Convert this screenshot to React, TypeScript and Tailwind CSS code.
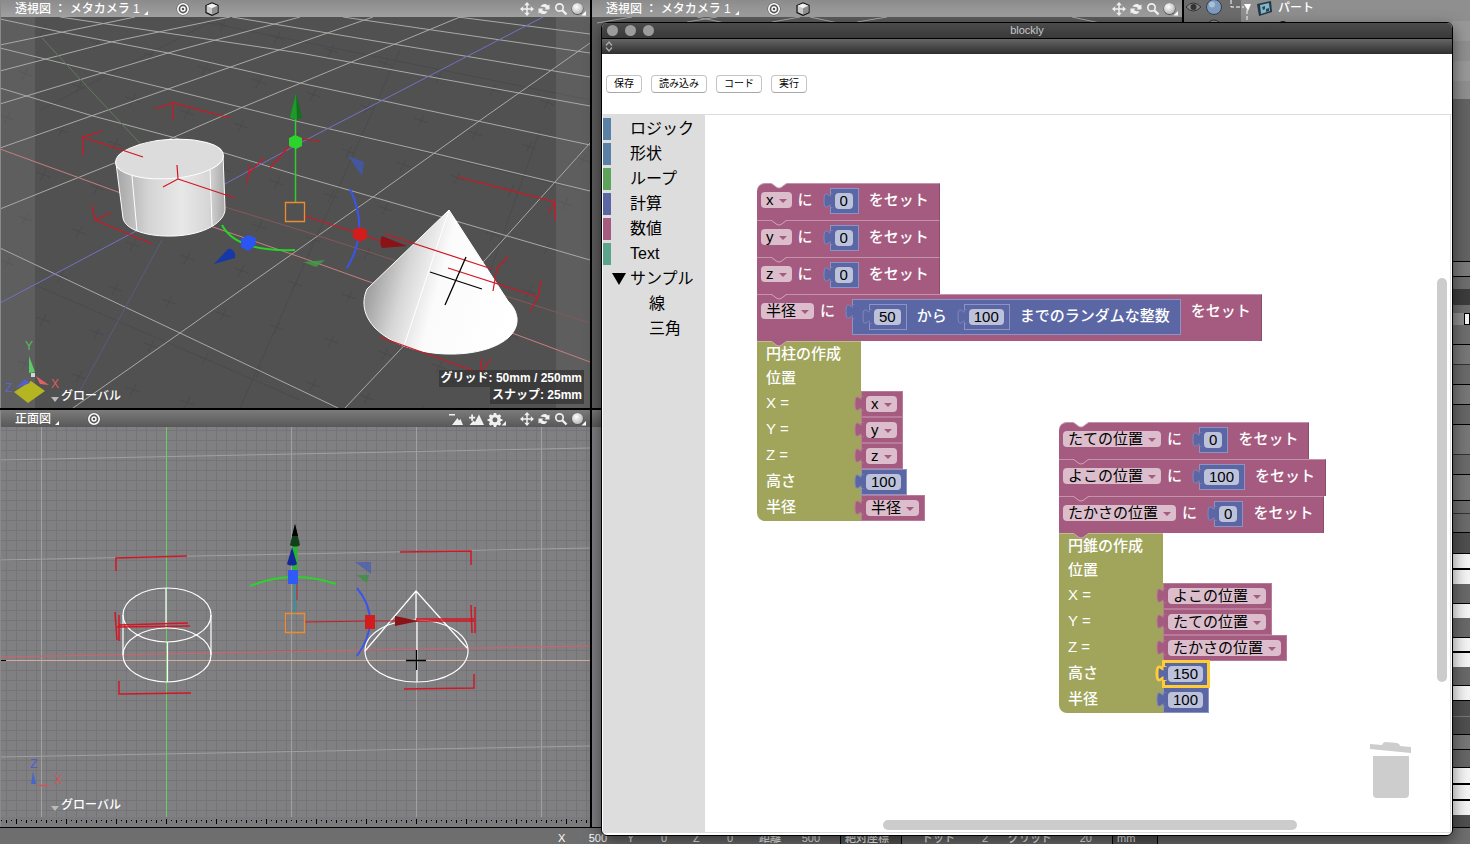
import type { ReactNode } from "react"
import clsx from "clsx"

type FieldProps = { value: string; label: string }

const variables = ["x", "y", "z", "半径", "たての位置", "よこの位置", "たかさの位置"]

const categories = [
  { name: "ロジック", color: "bg-[#5b80a5]" },
  { name: "形状", color: "bg-[#5b80a5]" },
  { name: "ループ", color: "bg-[#5ba55b]" },
  { name: "計算", color: "bg-[#5b67a5]" },
  { name: "数値", color: "bg-[#a55b80]" },
  { name: "Text", color: "bg-[#5ba58c]" },
]

const attributeRows = [
  "h-5 bg-[#8f8f8f]",
  "h-5 bg-[#989898]",
  "h-5 bg-[#8f8f8f]",
  "h-5 bg-[#989898]",
  "h-[18px] bg-[#8f8f8f]",
  "h-[162px] bg-[#636363]",
  "h-4 bg-[#7a7a7a] border-y border-black",
  "h-3 bg-[#6e6e6e]",
  "h-4 bg-[#3c3c3c]",
  "h-2 bg-[#6e6e6e]",
  "ml-3 h-3 bg-[#f4f4f4] border border-black",
  "h-5 bg-[#6e6e6e] border-b border-black",
  "h-5 bg-[#777] border-b border-[#333]",
  "h-5 bg-[#6a6a6a] border-b border-black",
  "h-5 bg-[#777] border-b border-black",
  "h-5 bg-[#666] border-b border-black",
  "h-[30px] bg-[#777] border-b border-[#333]",
  "h-5 bg-[#6a6a6a] border-b border-black",
  "h-[26px] bg-[#777] border-b border-black",
  "h-[13px] bg-[#6b6b6b] border-b border-[#333]",
  "h-[19px] bg-[#6b6b6b] border-b border-black",
  "h-[21px] bg-[#4f4f4f] border-b border-black",
  "h-[14px] bg-[#f4f4f4]",
  "h-4 bg-[#f4f4f4] border-t-2 border-black",
  "h-[19px] bg-[#696969]",
  "h-[15px] bg-[#f4f4f4] border-t border-black",
  "h-[19px] bg-[#696969]",
  "h-[14px] bg-[#f4f4f4] border-t border-black",
  "h-4 bg-[#f4f4f4] border-t-2 border-black",
  "h-[18px] bg-[#696969]",
  "h-[15px] bg-[#f4f4f4] border-t border-black",
  "h-4 bg-[#4f4f4f] border-t border-black",
  "h-[18px] bg-[#4f4f4f] border-t border-[#777]",
  "h-[15px] bg-[#777] border-t border-black",
  "h-[19px] bg-[#666] border-y border-black",
  "h-[15px] bg-[#f4f4f4]",
  "h-4 bg-[#f4f4f4] border-t-2 border-black",
  "h-4 bg-[#f4f4f4] border-t-2 border-black",
  "h-3 bg-[#4f4f4f]",
]

// ---------- viewport header ----------

function TargetIcon() {
  return (
    <svg className="size-3.5" viewBox="0 0 14 14" fill="none" aria-hidden="true">
      <circle cx="7" cy="7" r="6.5" fill="#555" />
      <circle cx="7" cy="7" r="5.2" stroke="#fff" strokeWidth="1.6" />
      <circle cx="7" cy="7" r="2" stroke="#fff" strokeWidth="1.4" />
    </svg>
  )
}

function CubeIcon() {
  return (
    <svg className="size-3.5" viewBox="0 0 14 14" aria-hidden="true">
      <path d="M1 3.5 7 1l6 2.5v7L7 13.4 1 10.5z" fill="#c9c9c9" stroke="#111" strokeWidth="1.2" />
      <path d="M1.6 3.8 7 1.6l5.4 2.2L7 6.2z" fill="#f2f2f2" />
      <path d="M7 6.2v6.6l5.4-2.6V3.8z" fill="#8f8f8f" />
    </svg>
  )
}

function Corner() {
  return <span className="mt-2 size-0 border-b-4 border-l-4 border-b-white border-l-transparent" />
}

function NavIcons() {
  return (
    <svg className="h-4 w-[66px]" viewBox="0 0 66 16" fill="none" aria-hidden="true">
      <path d="M7 3v10M2 8h10" stroke="#f0f0f0" strokeWidth="1.5" />
      <path d="m7 1 2.8 3.2H4.200zM7 15l2.800-3.200H4.200zM0 8l3.200-2.800v5.600zM14 8l-3.200-2.800v5.600z" fill="#f0f0f0" />
      <path d="M20.500 5.500C22 2.500 26 2 28 4.500l1.500-1V8.500h-5l1.500-1.500c-1.500-1.500-3.500-1-5.500-1.500z" fill="#f0f0f0" />
      <path d="M27.500 10.500C26 13.500 22 14 20 11.500l-1.500 1V7.500h5L22 9c1.500 1.500 3.500 1 5.500 1.500z" fill="#f0f0f0" />
      <circle cx="39.5" cy="6.5" r="3.7" stroke="#f0f0f0" strokeWidth="1.7" />
      <path d="m42.500 9.500 4 4" stroke="#f0f0f0" strokeWidth="2.4" />
      <circle cx="57.5" cy="8" r="6" fill="#555" />
      <circle cx="57.5" cy="7.5" r="5.5" fill="url(#knob)" />
      <path d="M66 10v4.500h-4.500z" fill="#fff" />
      <defs>
        <radialGradient id="knob" cx=".4" cy=".35" r=".7">
          <stop offset="0" stopColor="#fff" />
          <stop offset="1" stopColor="#b5b5b5" />
        </radialGradient>
      </defs>
    </svg>
  )
}

function FilterIcons() {
  return (
    <svg className="h-4 w-[60px]" viewBox="0 0 60 16" fill="#f0f0f0" aria-hidden="true">
      <path d="M1 3h6v1.600H1zM4 14l5.500-7 1.500 2.500L12.500 8l2.500 6zM21 5.800h2.200V3.500h1.800v2.300h2.200v1.700H25v2.300h-1.800V7.500H21zM21.500 14l4-4.500 1.500 1.500L31 3.500 36 14zM58 10v4.500h-4.500z" />
      <path
        d="M45.800 2h2.400l.4 1.800 1.300.5 1.600-1 1.700 1.700-1 1.600.5 1.300 1.800.4v1.400l-1.800.5-.5 1.300 1 1.500-1.700 1.700-1.600-1-1.300.5-.4 1.800h-2.400l-.4-1.800-1.300-.5-1.600 1-1.700-1.700 1-1.500-.5-1.300-1.800-.5V8.300l1.800-.4.5-1.300-1-1.600 1.700-1.700 1.600 1 1.300-.5zM47 6.300a2.500 2.500 0 1 0 0 5 2.500 2.500 0 0 0 0-5z"
        fillRule="evenodd"
      />
    </svg>
  )
}

type HeaderProps = { title?: string; cube?: boolean; filters?: boolean; dark?: boolean }

function ViewHeader({ title, cube, filters, dark }: HeaderProps) {
  return (
    <header
      className={clsx(
        "flex h-[17px] shrink-0 items-center pr-1 pl-[14px] text-xs leading-4 font-medium text-white",
        dark ? "bg-linear-to-b from-[#7b7b7b] to-[#585858]" : "bg-linear-to-b from-[#8b8b8b] to-[#a0a0a0]",
      )}
    >
      {title && (
        <>
          <h2 className="mr-1 font-medium">{title}</h2>
          <Corner />
          <span className="ml-7 flex gap-[15px]">
            <TargetIcon />
            {cube && <CubeIcon />}
          </span>
        </>
      )}
      <span className="ml-auto flex gap-3">
        {filters && <FilterIcons />}
        <NavIcons />
      </span>
    </header>
  )
}

// ---------- 3D scenes ----------

function CameraScene() {
  const crosses: string[] = []
  for (let row = 0; row < 9; row++) {
    for (let col = 0; col < 12; col++) {
      crosses.push(`M${col * 54 - row * 18} ${row * 44 + col * 13 - 30}l14 5m-4 -8l-6 12`)
    }
  }

  return (
    <svg className="size-full" viewBox="1 17 589 391" preserveAspectRatio="xMinYMin slice" fill="none" role="img" aria-label="透視図">
      <defs>
        <linearGradient id="cylinderSide">
          <stop offset="0" stopColor="#a5a5a5" />
          <stop offset=".3" stopColor="#d4d4d4" />
          <stop offset=".6" stopColor="#e8e8e8" />
          <stop offset=".85" stopColor="#d6d6d6" />
          <stop offset="1" stopColor="#a8a8a8" />
        </linearGradient>
        <linearGradient id="coneSide" x1="0" y1=".35" x2="1" y2=".6">
          <stop offset="0" stopColor="#8c8c8c" />
          <stop offset=".28" stopColor="#d6d6d6" />
          <stop offset=".5" stopColor="#fbfbfb" />
          <stop offset="1" stopColor="#fff" />
        </linearGradient>
      </defs>
      <path d="M0 17h590v391H0z" fill="#515151" />
      <path d={crosses.join("")} stroke="#494a4f" />
      <path d="M40 58 580 190M180 17 590 100M220 17 40 110M400 50 240 408M540 130 480 300M35 285 300 400" stroke="#4b4b4e" />
      <path d="M0 17h35v391H0zM556 17h34v391h-34z" fill="#fff" fillOpacity=".08" />
      <path
        d="M0 19 61 32 168 53 300 83 590 145M0 48 168 89 300 122 433 153 590 191M0 88 93 116 172 137 300 176 373 197 590 260M60 17 300 53 590 106M232 17 590 77M343 17 590 53M458 17 590 34M0 248 180 333 338 408M0 45 135 17M0 71 111 42 230 17M0 104 168 53 300 17M0 148 168 89 373 17M0 209 117 162 243 107 460 17M73 408 180 333 373 197 482 119 590 43M345 408 485 260 590 143"
        stroke="#a9a9a6"
      />
      <path d="m42 38 118 127" stroke="#5f7b63" />
      <path d="M162 240 75 400" stroke="#5d5a80" />
      <path d="m0 149 118 43 95 35 87 30 212 76 78 29" stroke="#c77f80" />
      <path d="m225 207 75 23 290 93" stroke="#84595a" />
      <path d="M543 17 300 143 223 185 0 303" stroke="#7371c4" />

      {/* cylinder */}
      <path d="M116 163 123 218C125 230 148 237 174 236 204 235 226 222 225 208L223 155z" fill="url(#cylinderSide)" />
      <path d="M116 163 123 218C125 230 148 237 174 236 204 235 226 222 225 208L223 155" stroke="#fff" />
      <ellipse cx="169.5" cy="159" rx="54" ry="19.5" transform="rotate(-4 169.5 159)" fill="#dcdcdc" stroke="#fff" />
      <path d="m132 176 5 55M210 170l2 56" stroke="#fff" />

      {/* cone */}
      <path d="M449 210 367 289C361 303 364 316 375 328 393 346 425 355 455 354 492 353 519 338 517 318 516 311 513 306 508 301z" fill="url(#coneSide)" stroke="#fff" />
      <path d="M449 210 404 346" stroke="#fff" />

      <g stroke="#d21623" strokeWidth="1.2">
        <path d="M230 118 173 103 155 109M173 103v17M143 157 83 137l19-6M83 137v19M177 165l1 14-15 8M178 179l57 19M92 205l3 15 16-7M95 220l57 24" />
        <path d="M250 165l-3 18M264 158 248 174M290 145l-20 23M300 139l20 2M458 177l97 25v19M555 202l-7 11M385 234l107 35M508 257l-11 11-4 23M448 268l90 29M541 280l-3 17-8 14M380 337l100 36 2-15M480 373l11-14" />
        <path d="m305 216 55 18 24 8" />
      </g>
      <path d="m430 272 52 17M466 257l-21 48" stroke="#000" strokeWidth="1.3" />

      {/* move gizmo */}
      <path d="M295.500 118v84" stroke="#2ccf2c" strokeWidth="1.5" />
      <path d="m296 93 6 24c-2 3-10 3-12 0z" fill="#14701c" />
      <path d="m296 93 1 26c-3 0-6 0-7-2z" fill="#1d9a27" />
      <path d="m289 138 6-3 7 3v8l-6 3-7-3z" fill="#2bd32b" />
      <path d="M285.500 202.500h19v19h-19z" stroke="#f08a2c" strokeWidth="1.3" />
      <path d="M350 189Q370 230 347 268" stroke="#3a55ee" strokeWidth="2" />
      <path d="m353 230 7-3 7 3v8l-7 4-7-4z" fill="#d31d1d" />
      <path d="m382 236 25 10-25 2c-2-3-2-9 0-12z" fill="#8b1216" />
      <path d="m348 156 16 6-2 14z" fill="#4157b4" opacity=".8" />
      <path d="M222 225Q236 252 295 250" stroke="#25d425" strokeWidth="2" />
      <path d="m303 262 22-2-9 7z" fill="#3ea043" opacity=".8" />
      <path d="m241 239 7-4 8 3-1 8-7 5-7-4z" fill="#2b55f2" />
      <path d="m214 264 14-15c4-1 8 3 7 9z" fill="#1638a8" />

      {/* axis widget */}
      <path d="m14 392 17-11 14 10-17 12z" fill="#b5b522" />
      <path d="m16 388 9-9 5 4z" fill="#5260cf" />
      <path d="m36 376 13 9-9-1z" fill="#e06161" />
      <path d="m29 356 6 16-6 1z" fill="#5acb68" />
      <path d="M31 373h4v4h-4z" fill="#d4d4d4" />
      <g className="font-[Liberation_Sans] text-xs" textAnchor="middle">
        <text x="29" y="350" fill="#55bd62">Y</text>
        <text x="55" y="388" fill="#d8605f">X</text>
        <text x="9" y="392" fill="#5a63d0">Z</text>
      </g>
    </svg>
  )
}

function FrontScene() {
  return (
    <svg className="size-full" viewBox="1 427 589 390" preserveAspectRatio="xMinYMin slice" fill="none" role="img" aria-label="正面図">
      <defs>
        <pattern id="fineGrid" x="6" y="0" width="10" height="10" patternUnits="userSpaceOnUse">
          <path d="M.5 0v10M0 .5h10" stroke="#747479" />
        </pattern>
      </defs>
      <path d="M0 427h590v390H0z" fill="#808082" />
      <path d="M0 427h590v390H0z" fill="url(#fineGrid)" />
      <path d="M41.500 427v390M291.500 427v390M416.500 427v390M541.500 427v390M0 460l590-12M0 560l590-12M0 757l590-11" stroke="#a0a0a0" />
      <path d="M166.500 427v390" stroke="#62d267" />
      <path d="M0 660.500h590" stroke="#d2aaa0" />
      <path d="m0 657 590-11" stroke="#d4606a" />
      <path d="M0 660.500h6" stroke="#000" />

      <g stroke="#fff" strokeWidth="1.2">
        <ellipse cx="167" cy="615" rx="44" ry="27" />
        <ellipse cx="167" cy="655" rx="44" ry="27" />
        <path d="M123 615v40M211 615v40M166 588v40M167.500 642v40" />
        <ellipse cx="416.5" cy="651" rx="51.5" ry="31" />
        <path d="m365 651 51-60 51 57M416 591v29M417 620v62" />
      </g>
      <g stroke="#d21623" strokeWidth="1.5">
        <path d="M116 571v-13l71-2M115 612l2 28M119 615v26M116 627l74-1M119 625l69-2M119 681v13l72-1M400 552l71-1v14M471 605l1 28M475 607v26M404 689l70-1v-14M416 619h58M416 621h58" />
        <path d="m305 622 65-1h25" strokeWidth="1" />
      </g>
      <path d="M416.500 650v20M406 660.500h20" stroke="#000" strokeWidth="1.3" />

      <path d="M295 543v28" stroke="#25b82a" strokeWidth="5" />
      <path d="m295 524 5 21c-2 2-8 2-10 0z" fill="#11401a" />
      <path d="m295 524 3 12h-6z" fill="#000" />
      <path d="m292 547 5 17c-2 2-8 2-10 0z" fill="#14279a" />
      <path d="M294.500 584v31" stroke="#1a9aa8" strokeWidth="1.5" />
      <path d="M297 584v16" stroke="#b7252c" />
      <path d="M250 586Q292 569 336 584" stroke="#2bd32b" strokeWidth="2" />
      <path d="M288 570h10v14h-10z" fill="#3159f5" />
      <path d="M285.500 613.500h19v19h-19z" stroke="#f08a2c" strokeWidth="1.3" />
      <path d="M357 588Q383 620 357 656" stroke="#3a55ee" strokeWidth="2" />
      <path d="M365 615h10v14h-10z" fill="#d31d1d" />
      <path d="m395 616 24 5-24 5z" fill="#8b1216" />
      <path d="M355 562h16v12z" fill="#4f5fb2" opacity=".8" />
      <path d="M356 575h13l-2 8z" fill="#3f8f43" opacity=".8" />

      <path d="m33 771 3 13h-5z" fill="#4866c9" />
      <path d="M38 785.500h11" stroke="#d0565a" strokeWidth="1.5" />
      <g className="font-[Liberation_Sans] text-xs" textAnchor="middle">
        <text x="34" y="768" fill="#4e5cd0">Z</text>
        <text x="58" y="784" fill="#d0565a">X</text>
      </g>
    </svg>
  )
}

function Ruler() {
  return (
    <svg className="h-[10px] w-full shrink-0 bg-[#7b7b7d]" aria-hidden="true">
      <defs>
        <pattern id="ticks" x="5" width="50" height="10" patternUnits="userSpaceOnUse">
          <path d="M10.500 2v5M20.500 3v3M30.500 3v3M40.500 3v3M.5 3v3M5.500 3v1M15.500 3v1M25.500 3v1M35.500 3v1M45.500 3v1" stroke="#000" />
        </pattern>
      </defs>
      <rect width="100%" height="10" fill="url(#ticks)" />
    </svg>
  )
}

function GlobalLabel() {
  return (
    <p className="absolute bottom-1 left-[50px] flex items-end gap-0.5 text-xs leading-4 font-medium text-white">
      <span className="mb-0.5 border-x-4 border-t-[5px] border-x-transparent border-t-[#bbb]" />
      グローバル
    </p>
  )
}

// ---------- blocks ----------

function VariableSelect({ value, label }: FieldProps) {
  return (
    <span className="relative flex">
      <select
        aria-label={label}
        defaultValue={value}
        className="field-sizing-content h-4 appearance-none rounded bg-[#dbbdcc] pr-[18px] pl-[5px] text-[15px] leading-4 font-normal text-black"
      >
        {variables.map((name) => (
          <option key={name}>{name}</option>
        ))}
      </select>
      <span className="pointer-events-none absolute top-[7px] right-[5px] border-x-4 border-t-4 border-x-transparent border-t-[#a55b80]" />
    </span>
  )
}

function NumberInput({ value, label }: FieldProps) {
  return (
    <input
      aria-label={label}
      defaultValue={value}
      className="field-sizing-content h-4 rounded bg-[#bdc2db] px-[5px] text-[15px] leading-4 font-normal text-black"
    />
  )
}

function PuzzleTab({ tone, selected }: { tone: "math" | "variable"; selected?: boolean }) {
  return (
    <svg className="absolute -top-px right-full -mr-px h-[22px] w-[9px] overflow-visible" viewBox="0 0 9 22" aria-hidden="true">
      <path
        d="M9 5c0 10-8-8-8 7.500s8-2.500 8 7.500"
        fill={tone === "math" ? "#5b67a5" : "#a55b80"}
        stroke={selected ? "#fc3" : tone === "math" ? "#7f89bc" : "#b87c99"}
        strokeWidth={selected ? 3 : 1}
      />
      <path d="M9 6v13" stroke={tone === "math" ? "#5b67a5" : "#a55b80"} strokeWidth="3" />
    </svg>
  )
}

type ValueBlockProps = { tone: "math" | "variable"; selected?: boolean; children: ReactNode }

function ValueBlock({ tone, selected, children }: ValueBlockProps) {
  return (
    <div
      className={clsx(
        "relative flex items-start border py-1 pr-[5px] pl-1",
        tone === "math" ? "border-[#8b94c4] bg-[#5b67a5]" : "border-[#b87c99] bg-[#a55b80]",
        selected && "z-10 outline-3 -outline-offset-2 outline-[#fc3]",
      )}
    >
      <PuzzleTab tone={tone} selected={selected} />
      {children}
    </div>
  )
}

function NumberBlock({ value, label, selected }: FieldProps & { selected?: boolean }) {
  return (
    <ValueBlock tone="math" selected={selected}>
      <NumberInput value={value} label={label} />
    </ValueBlock>
  )
}

function Notch({ fill }: { fill: string }) {
  return (
    <svg className="absolute -top-px left-[13px] h-[6px] w-[18px]" viewBox="0 0 18 6" fill={fill} aria-hidden="true">
      <path d="M1 0 7 4.500Q9 5.500 11 4.500L17 0" stroke="#cfa5b9" />
    </svg>
  )
}

function SetBlock({ variable, first, children }: { variable: string; first?: boolean; children: ReactNode }) {
  return (
    <div
      className={clsx(
        "relative flex w-fit items-start border-t border-r border-t-[#c592ac] border-r-[#8b4d6c] bg-[#a55b80] pt-1 pr-2.5 pb-1.5 pl-1 text-[15px] leading-4 font-medium text-white",
        first && "rounded-tl-lg",
      )}
    >
      <Notch fill={first ? "#fff" : "#a55b80"} />
      <div className="flex gap-1.5 pt-1">
        <VariableSelect value={variable} label="変数" />
        <span>に</span>
      </div>
      <div className="mr-2.5 ml-[17px]">{children}</div>
      <span className="pt-1">をセット</span>
    </div>
  )
}

type Input = { label: string; field: "variable" | "number"; value: string; selected?: boolean }

function ShapeBlock({ title, inputs }: { title: string; inputs: Input[] }) {
  return (
    <div className="relative w-[104px] rounded-bl-lg border-t border-[#bcc08c] bg-[#a0a55b] text-[15px] leading-4 font-medium text-white">
      <Notch fill="#a55b80" />
      <p className="h-6 pt-1 pl-[9px]">{title}</p>
      <p className="h-[25px] pt-1 pl-[9px]">位置</p>
      {inputs.map((input) => (
        <div key={input.label} className="flex h-[26px]">
          <span className="w-full shrink-0 pt-1 pl-[9px]">{input.label}</span>
          {input.field === "number" ? (
            <NumberBlock value={input.value} label={input.label} selected={input.selected} />
          ) : (
            <ValueBlock tone="variable">
              <VariableSelect value={input.value} label={input.label} />
            </ValueBlock>
          )}
        </div>
      ))}
    </div>
  )
}

function TrashIcon() {
  return (
    <svg className="absolute right-[38px] bottom-[34px] h-[57px] w-[43px]" viewBox="0 0 43 57" fill="#cdcdcd" aria-hidden="true">
      <path d="m1 3 12 1q1-3 4-3l11 1q3 1 3 3l11 1v6L1 8z" />
      <path d="M4 15h36v38q0 4-4 4H8q-4 0-4-4z" />
    </svg>
  )
}

function Workspace() {
  return (
    <div className="relative flex-1 overflow-hidden border-r border-b border-[#ddd] bg-white">
      <div className="absolute top-[68px] left-[52px]">
        <SetBlock variable="x" first>
          <NumberBlock value="0" label="x の値" />
        </SetBlock>
        <SetBlock variable="y">
          <NumberBlock value="0" label="y の値" />
        </SetBlock>
        <SetBlock variable="z">
          <NumberBlock value="0" label="z の値" />
        </SetBlock>
        <SetBlock variable="半径">
          <div className="relative flex items-start border border-[#8b94c4] bg-[#5b67a5] py-1 pr-2.5 pl-4">
            <PuzzleTab tone="math" />
            <NumberBlock value="50" label="最小" />
            <span className="mr-[17px] ml-2.5 pt-1">から</span>
            <NumberBlock value="100" label="最大" />
            <span className="ml-2.5 pt-1">までのランダムな整数</span>
          </div>
        </SetBlock>
        <ShapeBlock
          title="円柱の作成"
          inputs={[
            { label: "X =", field: "variable", value: "x" },
            { label: "Y =", field: "variable", value: "y" },
            { label: "Z =", field: "variable", value: "z" },
            { label: "高さ", field: "number", value: "100" },
            { label: "半径", field: "variable", value: "半径" },
          ]}
        />
      </div>

      <div className="absolute top-[307px] left-[354px]">
        <SetBlock variable="たての位置" first>
          <NumberBlock value="0" label="たての位置の値" />
        </SetBlock>
        <SetBlock variable="よこの位置">
          <NumberBlock value="100" label="よこの位置の値" />
        </SetBlock>
        <SetBlock variable="たかさの位置">
          <NumberBlock value="0" label="たかさの位置の値" />
        </SetBlock>
        <ShapeBlock
          title="円錐の作成"
          inputs={[
            { label: "X =", field: "variable", value: "よこの位置" },
            { label: "Y =", field: "variable", value: "たての位置" },
            { label: "Z =", field: "variable", value: "たかさの位置" },
            { label: "高さ", field: "number", value: "150", selected: true },
            { label: "半径", field: "number", value: "100" },
          ]}
        />
      </div>

      <TrashIcon />
      <div className="absolute top-[163px] right-[3px] h-[404px] w-2.5 rounded-full bg-[#ccc]" />
      <div className="absolute right-[153px] bottom-0.5 h-2.5 w-[414px] rounded-full bg-[#ccc]" />
    </div>
  )
}

function Toolbox() {
  return (
    <nav className="w-[102px] shrink-0 bg-[#ddd] pt-[3px] text-base leading-[22px] text-black" aria-label="ブロック">
      <ul>
        {categories.map((category) => (
          <li key={category.name} className="mb-[3px] flex h-[22px] gap-[19px]">
            <span className={clsx("w-2", category.color)} />
            {category.name}
          </li>
        ))}
        <li>
          <div className="mb-[3px] flex h-[22px] items-center gap-1 pl-[9px]">
            <span className="border-x-[7px] border-t-[12px] border-x-transparent border-t-black" />
            サンプル
          </div>
          <ul className="pl-[46px]">
            <li className="mb-[3px] h-[22px]">線</li>
            <li className="h-[22px]">三角</li>
          </ul>
        </li>
      </ul>
    </nav>
  )
}

function BlocklyWindow() {
  return (
    <section className="absolute top-[22px] right-[17px] bottom-2 left-[601px] flex flex-col overflow-hidden rounded-md border border-black bg-white shadow-[0_6px_16px_rgba(0,0,0,0.5)]">
      <header className="relative flex h-4 shrink-0 items-center justify-center border-b border-black bg-linear-to-b from-[#4b4b4b] to-[#393939] text-[11px] leading-[15px] text-[#c8c8c8]">
        <span className="absolute left-[5px] flex gap-[7px]">
          <span className="size-[11px] rounded-full bg-[#9c9c9c]" />
          <span className="size-[11px] rounded-full bg-[#9c9c9c]" />
          <span className="size-[11px] rounded-full bg-[#9c9c9c]" />
        </span>
        <h1>blockly</h1>
      </header>
      <div className="flex h-[15px] shrink-0 items-center bg-linear-to-b from-[#666] to-[#2f2f2f] pl-[3px]">
        <svg className="h-[11px] w-2" viewBox="0 0 8 11" fill="none" stroke="#aaa" strokeWidth="1.3" aria-hidden="true">
          <path d="M1 4.500 4 1l3 3.500M1 6.500 4 10l3-3.500" />
        </svg>
      </div>
      <div className="flex h-[61px] shrink-0 items-center gap-[9px] border-b border-[#ddd] pl-1 text-[10px] leading-4 text-black">
        {["保存", "読み込み", "コード", "実行"].map((label) => (
          <button key={label} className="rounded border border-[#c4c4c4] border-b-[#a8a8a8] bg-white px-[7px]">
            {label}
          </button>
        ))}
      </div>
      <div className="flex min-h-0 flex-1 pr-px pb-0.5 pl-px">
        <Toolbox />
        <Workspace />
      </div>
    </section>
  )
}

// ---------- side panel and status bar ----------

function ObjectPanel() {
  return (
    <aside className="row-span-2 flex justify-between overflow-hidden bg-[#8f8f8f]">
      <div className="flex h-[30px] items-start text-xs font-medium text-white">
        <svg className="h-[30px] w-[110px]" viewBox="0 0 110 30" aria-hidden="true">
          <path d="M0 0h57v30H0z" fill="#6c6c6c" />
          <path d="M2 7q7-8 15 0-8 8-15 0z" fill="#888" stroke="#333" />
          <circle cx="9.5" cy="7" r="3" fill="#333" />
          <circle cx="30" cy="7" r="7.5" fill="#7d9bbd" stroke="#31404f" />
          <circle cx="28" cy="4.5" r="3" fill="#a9c0d8" />
          <circle cx="30" cy="27" r="7" fill="#888" stroke="#333" />
          <path d="M47 0v7h13M63 10v10" stroke="#fff" strokeDasharray="4 2" fill="none" />
          <path d="M60 4h7l-3 7z" fill="#fff" />
          <path d="m73 4 14-3 1 11-13 4z" fill="#1f3845" />
          <path d="m76 5 9-2 1 8-9 3z" fill="#86b4c8" />
          <path d="m78 7 3-1v3l-2 1zM82 9l3-1v3l-3 1z" fill="#28485a" />
          <circle cx="99" cy="26" r="5" fill="#222" />
        </svg>
        <span className="-ml-4 leading-4">パート</span>
      </div>
      <div className="flex w-[18px] flex-col">
        <span className="h-[22px] bg-[#8f8f8f]" />
        {attributeRows.map((row, index) => (
          <span key={index} className={clsx("shrink-0", row)} />
        ))}
      </div>
    </aside>
  )
}

function StatusBar() {
  const readouts = [
    { label: "X", value: "500", width: "w-[49px]" },
    { label: "Y", value: "0", width: "w-[46px] pr-1.5" },
    { label: "Z", value: "0", width: "w-[46px] pr-1.5" },
    { label: "距離", value: "500", width: "w-[61px]" },
  ]

  return (
    <footer className="h-[17px] shrink-0 overflow-hidden border-t border-black bg-[#6e6e6e] pt-0.5 pl-[558px] text-[11px] leading-4 font-medium text-white">
      <div className="flex gap-5 whitespace-nowrap">
        {readouts.map((item) => (
          <p key={item.label} className={clsx("flex shrink-0 justify-between", item.width)}>
            <span>{item.label}</span>
            <span>{item.value}</span>
          </p>
        ))}
        <select aria-label="座標" className="h-4 w-[62px] appearance-none border-x border-black bg-[#585858] pl-1">
          <option>絶対座標</option>
        </select>
        <p className="flex w-[66px] shrink-0 justify-between">
          <span>ドット</span>
          <span>2</span>
        </p>
        <p className="flex w-[84px] shrink-0 justify-between">
          <span>グリッド</span>
          <span>20</span>
        </p>
        <select aria-label="単位" className="h-4 w-[46px] appearance-none border-x border-black bg-[#585858] pl-1">
          <option>mm</option>
        </select>
      </div>
    </footer>
  )
}

export default function App() {
  return (
    <main className="relative flex h-screen flex-col overflow-hidden bg-black font-['Liberation_Sans','Noto_Sans_CJK_JP',sans-serif]">
      <div className="grid min-h-0 flex-1 grid-cols-[590fr_590fr_286fr] grid-rows-[408fr_417fr] gap-0.5">
        <section className="relative flex min-h-0 flex-col overflow-hidden border-l border-[#8a8a8a]">
          <ViewHeader title="透視図 ： メタカメラ 1" cube />
          <div className="min-h-0 flex-1">
            <CameraScene />
          </div>
          <GlobalLabel />
          <div className="absolute right-1.5 bottom-1 flex flex-col items-end text-xs leading-[17px] font-bold text-white">
            <span className="bg-[#363636]/80 px-0.5">グリッド: 50mm / 250mm</span>
            <span className="bg-[#363636]/80 px-0.5">スナップ: 25mm</span>
          </div>
        </section>
        <section className="flex min-h-0 flex-col overflow-hidden bg-[#5b5b5b]">
          <ViewHeader title="透視図 ： メタカメラ 1" cube />
          <svg className="h-2 w-full shrink-0" viewBox="0 0 590 8" stroke="#a8a8a8" fill="none" aria-hidden="true">
            <path d="M5 6 40 0M95 5l30-5M105 0l28 6M180 5l28-5M218 0l28 6M265 5l30-5M480 0l28 6" />
          </svg>
        </section>
        <ObjectPanel />
        <section className="relative flex min-h-0 flex-col overflow-hidden border-l border-[#8a8a8a]">
          <ViewHeader title="正面図" filters dark />
          <div className="relative min-h-0 flex-1">
            <FrontScene />
            <GlobalLabel />
          </div>
          <Ruler />
        </section>
        <section className="flex min-h-0 flex-col overflow-hidden bg-[#7e7e80]">
          <ViewHeader dark />
        </section>
      </div>
      <StatusBar />
      <BlocklyWindow />
    </main>
  )
}
